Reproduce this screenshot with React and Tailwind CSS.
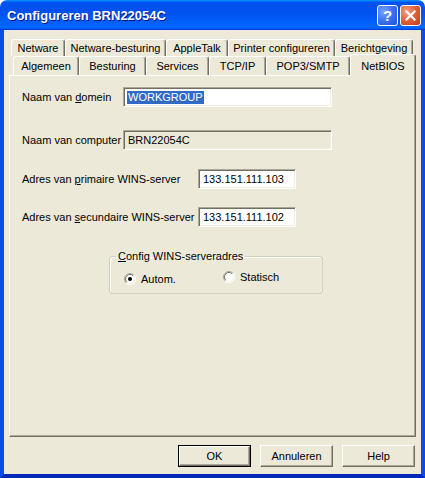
import React from 'react';

const row1 = [
  { label: 'Netware', w: 'w-[54px]' },
  { label: 'Netware-besturing', w: 'w-[101px]' },
  { label: 'AppleTalk', w: 'w-[62px]' },
  { label: 'Printer configureren', w: 'w-[107px]' },
  { label: 'Berichtgeving', w: 'w-[78px]' },
];

const row2 = [
  { label: 'Algemeen', w: 'w-[66px]' },
  { label: 'Besturing', w: 'w-[67px]' },
  { label: 'Services', w: 'w-[63px]' },
  { label: 'TCP/IP', w: 'w-[57px]' },
  { label: 'POP3/SMTP', w: 'w-[84px]' },
];

const tabEdge =
  'border-t border-l border-r border-t-white border-l-white border-r-[#716F64] rounded-t-[3px] shadow-[inset_-1px_0_0_#ACA899]';

const Tab = ({ label, w, h }) => (
  <div className={`${w} ${h} ${tabEdge} flex items-center justify-center pt-[1px] bg-[#ECE9D8]`}>
    {label}
  </div>
);

const sunken =
  'border border-t-[#ACA899] border-l-[#ACA899] border-r-white border-b-white shadow-[inset_1px_1px_0_#716F64,inset_-1px_-1px_0_#F1EFE2]';

const raised =
  'border-t border-l border-r border-b border-t-white border-l-white border-r-[#716F64] border-b-[#716F64] shadow-[inset_-1px_-1px_0_#ACA899]';

const Radio = ({ checked }) => (
  <svg width="12" height="12" viewBox="0 0 12 12" className="shrink-0">
    <circle cx="6" cy="6" r="5" fill="#fff" />
    <path d="M2.1 9.9A5.5 5.5 0 0 1 9.9 2.1" fill="none" stroke="#ACA899" />
    <path d="M2.8 9.2A4.5 4.5 0 0 1 9.2 2.8" fill="none" stroke="#716F64" />
    <path d="M9.9 2.1A5.5 5.5 0 0 1 2.1 9.9" fill="none" stroke="#fff" />
    <path d="M9.2 2.8A4.5 4.5 0 0 1 2.8 9.2" fill="none" stroke="#F1EFE2" />
    {checked && <circle cx="6" cy="6" r="2" fill="#000" />}
  </svg>
);

const Field = ({ labelW, label, value, inputW, disabled, selected }) => (
  <div className="flex items-center">
    <div className={`${labelW} shrink-0`}>{label}</div>
    <div
      className={`${inputW} h-[20px] ${sunken} ${disabled ? 'bg-[#ECE9D8]' : 'bg-white'} flex items-center pl-[3px]`}
    >
      {selected ? (
        <span className="bg-[#316AC5] text-white leading-[13px] px-[1px]">{value}</span>
      ) : (
        <span className="px-[1px]">{value}</span>
      )}
    </div>
  </div>
);

const Button = ({ children, isDefault }) => (
  <div
    className={`w-[73px] h-[22px] flex items-center justify-center ${
      isDefault ? 'border border-black' : ''
    }`}
  >
    <div className={`w-full h-full ${raised} flex items-center justify-center`}>{children}</div>
  </div>
);

export default function App() {
  return (
    <div className="w-[425px] h-[478px] flex flex-col bg-white font-['Liberation_Sans',Arial,sans-serif] text-[11px] text-black">
      {/* Title bar */}
      <div className="h-[30px] shrink-0 rounded-t-[7px] bg-[linear-gradient(180deg,#0997ff,#0053ee_8%,#0050ee_40%,#0066ff_88%,#0066ff_93%,#005bff_95%,#003dd7_96%,#003dd7)] flex items-center pl-[7px] pr-[4px]">
        <div className="flex-1 text-white font-bold text-[13px] pt-[1px] [text-shadow:1px_1px_#0f1089]">
          Configureren BRN22054C
        </div>
        <div className="flex gap-[2px]">
          <div className="w-[21px] h-[21px] rounded-[3px] border border-white bg-[radial-gradient(circle_at_30%_30%,#7aa2ff,#3f6ff0_50%,#2350d6)] flex items-center justify-center text-white font-bold text-[15px] leading-none">
            ?
          </div>
          <div className="w-[21px] h-[21px] rounded-[3px] border border-white bg-[radial-gradient(circle_at_30%_30%,#f0a080,#e0603a_50%,#c23c18)] flex items-center justify-center">
            <svg width="11" height="11" viewBox="0 0 11 11">
              <path d="M1.5 1.5L9.5 9.5M9.5 1.5L1.5 9.5" stroke="#fff" strokeWidth="2.2" strokeLinecap="square" />
            </svg>
          </div>
        </div>
      </div>

      {/* Window body */}
      <div className="flex-1 flex flex-col bg-[#ECE9D8] border-x-[4px] border-b-[4px] border-x-[#0a4de4] border-b-[#0029b8] px-[5px] pt-[9px]">
        {/* Tabs */}
        <div className="flex ml-[2px]">
          {row1.map((t) => (
            <Tab key={t.label} label={t.label} w={t.w} h="h-[17px]" />
          ))}
        </div>
        <div className="flex items-end ml-[4px] -mt-[2px] relative z-10">
          {row2.map((t) => (
            <Tab key={t.label} label={t.label} w={t.w} h="h-[19px]" />
          ))}
          <div className="w-[66px] h-[22px] -mb-[1px] border-t border-l border-r border-t-white border-l-white border-r-[#716F64] rounded-t-[3px] shadow-[inset_-1px_0_0_#ACA899] bg-[#ECE9D8] flex items-start justify-center pt-[3px]">
            NetBIOS
          </div>
        </div>

        {/* Panel */}
        <div className={`h-[362px] shrink-0 ${raised} pl-[12px] pt-[11px] flex flex-col`}>
          <Field
            labelW="w-[101px]"
            inputW="w-[209px]"
            label={
              <>
                Naam van <span className="underline">d</span>omein
              </>
            }
            value="WORKGROUP"
            selected
          />
          <div className="mt-[23px]">
            <Field labelW="w-[101px]" inputW="w-[209px]" label="Naam van computer" value="BRN22054C" disabled />
          </div>
          <div className="mt-[19px]">
            <Field
              labelW="w-[176px]"
              inputW="w-[98px]"
              label={
                <>
                  Adres van <span className="underline">p</span>rimaire WINS-server
                </>
              }
              value="133.151.111.103"
            />
          </div>
          <div className="mt-[18px]">
            <Field
              labelW="w-[176px]"
              inputW="w-[98px]"
              label={
                <>
                  Adres van <span className="underline">s</span>ecundaire WINS-server
                </>
              }
              value="133.151.111.102"
            />
          </div>

          <fieldset className="ml-[87px] mt-[21px] w-[214px] h-[46px] border border-[#D0D0BF] rounded-[3px] shadow-[inset_1px_1px_0_#fff] pl-[6px] pt-[6px]">
            <legend className="px-[2px]">
              <span className="underline">C</span>onfig WINS-serveradres
            </legend>
            <div className="flex items-center ml-[8px]">
              <div className="w-[99px] flex items-center gap-[5px]">
                <Radio checked />
                <span>Autom.</span>
              </div>
              <div className="flex items-center gap-[5px] -mt-[3px]">
                <Radio />
                <span>Statisch</span>
              </div>
            </div>
          </fieldset>
        </div>

        {/* Buttons */}
        <div className="flex justify-end gap-[9px] mt-[8px] mr-[1px]">
          <Button isDefault>OK</Button>
          <Button>Annuleren</Button>
          <Button>Help</Button>
        </div>
      </div>
    </div>
  );
}
